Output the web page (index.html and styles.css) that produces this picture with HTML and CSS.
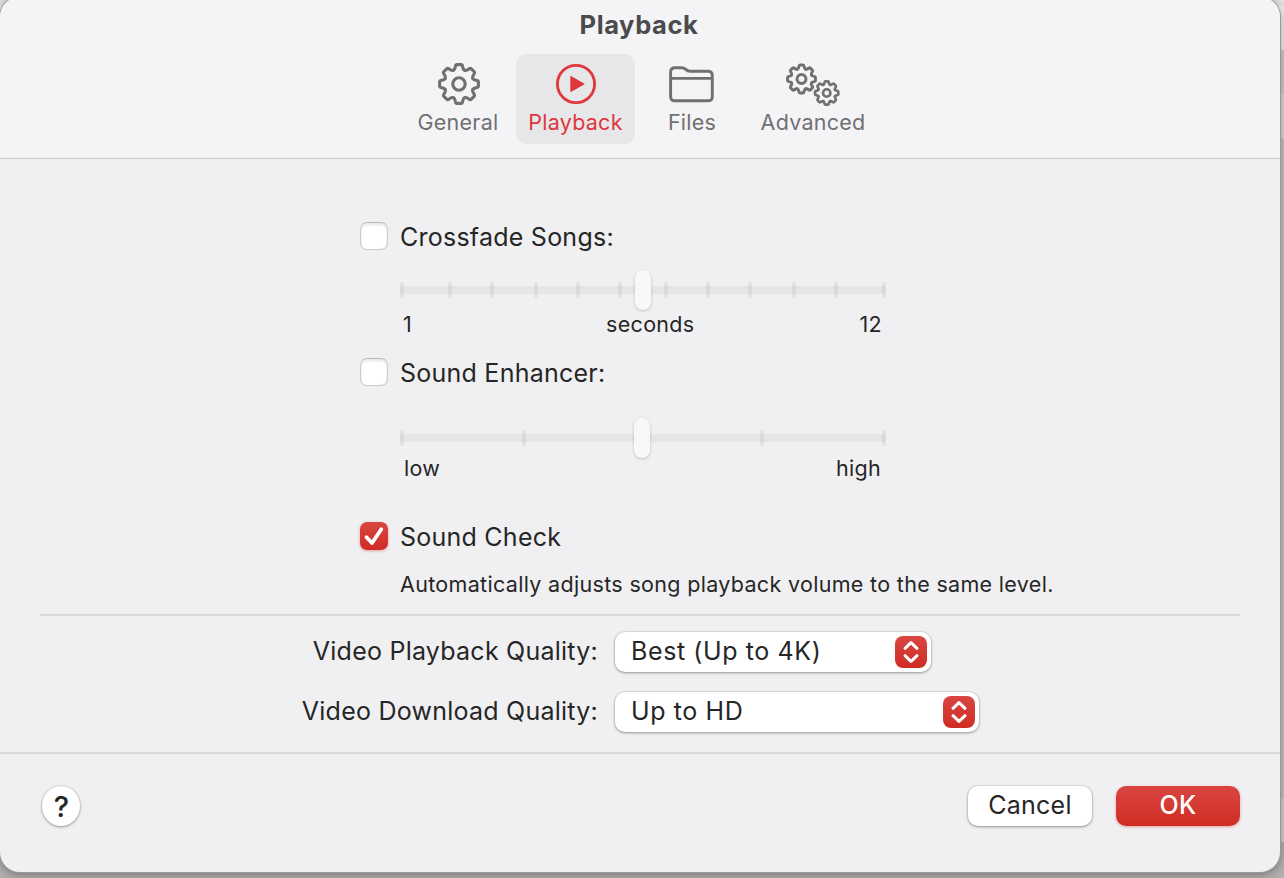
FILE: index.html
```html
<!DOCTYPE html>
<html lang="en">
  <head>
    <meta charset="UTF-8" />
    <meta name="viewport" content="width=device-width, initial-scale=1.0" />
    <title>Playback</title>
    <link rel="stylesheet" href="styles.css">
  </head>
  <body>
    <svg class="defs" width="0" height="0">
      <defs>
        <path id="tooth" d="M-5.7,-13.7 C-4.2,-14.4 -3.9,-15 -3.6,-17.5 Q-3.3,-19.4 -2,-19.4 H2 Q3.3,-19.4 3.6,-17.5 C3.9,-15 4.2,-14.4 5.7,-13.7" />
        <g id="gear">
          <use href="#tooth" />
          <use href="#tooth" transform="rotate(45)" />
          <use href="#tooth" transform="rotate(90)" />
          <use href="#tooth" transform="rotate(135)" />
          <use href="#tooth" transform="rotate(180)" />
          <use href="#tooth" transform="rotate(225)" />
          <use href="#tooth" transform="rotate(270)" />
          <use href="#tooth" transform="rotate(315)" />
          <circle r="6.2" />
        </g>
      </defs>
    </svg>
    <div class="window">
      <header>
        <h1>Playback</h1>
        <nav class="tabs">
          <div class="tab general">
            <svg width="60" height="48" viewBox="-31 -24 60 48"><use href="#gear" stroke-width="3.1" /></svg>
            <span>General</span>
          </div>
          <div class="tab playback active">
            <svg width="60" height="48" viewBox="-30 -24 60 48">
              <circle r="18.6" stroke-width="2.8" />
              <path class="solid" d="M-5,-7.2 L7.8,0 L-5,7.2 Z" stroke-width="1.4" />
            </svg>
            <span>Playback</span>
          </div>
          <div class="tab files">
            <svg width="60" height="48" viewBox="1 0 60 48">
              <path d="M9.6,36.5 V12.3 Q9.6,7.8 14,7.8 H20.5 Q23,7.8 24.7,9.4 Q26.6,11.3 29,11.3 H47 Q51.3,11.3 51.3,15.7 V36.5 Q51.3,40.8 47,40.8 H14 Q9.6,40.8 9.6,36.5 M9.6,18.4 H51.3" stroke-width="2.9" />
            </svg>
            <span>Files</span>
          </div>
          <div class="tab advanced">
            <svg width="60" height="48" viewBox="0 0 60 48">
              <use href="#gear" transform="translate(18.5 19) scale(.72)" stroke-width="4.1" />
              <use href="#gear" transform="translate(43.7 33) scale(.6)" stroke-width="4.4" />
            </svg>
            <span>Advanced</span>
          </div>
        </nav>
      </header>
      <main>
        <div class="row crossfade">
          <span class="checkbox"></span>
          <label>Crossfade Songs:</label>
        </div>
        <div class="slider">
          <svg width="486" height="44">
            <rect class="track" y="18" width="486" height="8" rx="3" />
            <path class="ticks" d="M2,16V28 M50,16V28 M92,16V28 M136,16V28 M178,16V28 M220,16V28 M266,16V28 M308,16V28 M350,16V28 M394,16V28 M436,16V28 M484,16V28" />
            <rect class="thumb" x="235" y="2" width="16" height="40" rx="8" />
          </svg>
          <div class="scale"><span>1</span><span class="unit">seconds</span><span>12</span></div>
        </div>
        <div class="row enhancer">
          <span class="checkbox"></span>
          <label>Sound Enhancer:</label>
        </div>
        <div class="slider low-high">
          <svg width="486" height="44">
            <rect class="track" y="18" width="486" height="8" rx="3" />
            <path class="ticks" d="M2,16V28 M124,16V28 M362,16V28 M484,16V28" />
            <rect class="thumb" x="234" y="2" width="16" height="40" rx="8" />
          </svg>
          <div class="scale"><span>low</span><span>high</span></div>
        </div>
        <div class="row check">
          <span class="checkbox checked">
            <svg width="28" height="28"><path d="M6.5,15.2 L12,21 L21.3,7.3" /></svg>
          </span>
          <label>Sound Check</label>
        </div>
        <p class="hint">Automatically adjusts song playback volume to the same level.</p>
        <hr>
        <div class="field">
          <label>Video Playback Quality:</label>
          <div class="select best">
            <span>Best (Up to 4K)</span>
            <svg class="arrows" width="32" height="32"><path d="M10,12.3 L16,6.6 L22,12.3 M10,19.7 L16,25.4 L22,19.7" /></svg>
          </div>
        </div>
        <div class="field">
          <label>Video Download Quality:</label>
          <div class="select hd">
            <span>Up to HD</span>
            <svg class="arrows" width="32" height="32"><path d="M10,12.3 L16,6.6 L22,12.3 M10,19.7 L16,25.4 L22,19.7" /></svg>
          </div>
        </div>
      </main>
      <footer>
        <button class="help">?</button>
        <button class="btn cancel">Cancel</button>
        <button class="btn ok">OK</button>
      </footer>
    </div>
  </body>
</html>
```
FILE: styles.css
```css
* {
  box-sizing: border-box;
}
body {
  margin: 0;
  height: 878px;
  overflow: hidden;
  background: linear-gradient(#e4e4e4 0 6px, #f0f0f0 6px 50px, #cfcfcf 50px 94px, #dcdcdc 94px 138px, #c6c6c6 138px 798px, #d2d2d2 798px 842px, #b2b2b2 842px);
  font-family: Inter, "Liberation Sans", sans-serif;
  font-size: 25px;
  letter-spacing: 0.24px;
  color: #262627;
}
.defs {
  position: absolute;
}
.window {
  width: 1280px;
  height: 875px;
  margin-top: -3px;
  display: flex;
  flex-direction: column;
  background: #f0f0f2;
  border-radius: 20px;
  box-shadow: 0 0 0 1px #999, 0 2px 12px rgba(0, 0, 0, 0.4);
  overflow: hidden;
}
header {
  height: 162px;
  flex: none;
  padding-top: 4px;
  background: #f4f4f6;
  border-bottom: 1px solid #c9c9cb;
}
h1 {
  margin: 0;
  height: 53px;
  line-height: 44px;
  padding-top: 2px;
  padding-right: 2px;
  font-size: 25.5px;
  font-weight: 700;
  letter-spacing: 0.6px;
  text-align: center;
  color: #4b4b4d;
}
.tabs {
  display: flex;
  padding-left: 400px;
}
.tab {
  height: 90px;
  padding-top: 6px;
  display: flex;
  flex-direction: column;
  align-items: center;
  border-radius: 11px;
  font-size: 21.5px;
  line-height: 28px;
  letter-spacing: 0.25px;
  color: #707072;
}
.tab svg {
  flex: none;
  fill: none;
  stroke: #707072;
  stroke-linecap: round;
  stroke-linejoin: round;
}
.general {
  width: 116px;
}
.playback {
  width: 119px;
}
.files {
  width: 112px;
  margin-left: 1px;
}
.advanced {
  width: 130px;
}
.active {
  background: #e7e7e9;
  color: #df373c;
}
.active svg {
  stroke: #df373c;
}
.solid {
  fill: #df373c;
}
main {
  height: 593px;
  flex: none;
}
.row {
  display: flex;
  align-items: center;
  gap: 12px;
  height: 28px;
  padding-left: 360px;
}
.row label {
  line-height: 30px;
  padding-top: 2px;
}
.checkbox {
  width: 28px;
  height: 28px;
  flex: none;
  border-radius: 7px;
  background: #fff;
  border: 1px solid #cacacc;
  border-top-color: #b8b8ba;
  box-shadow: inset 0 2px 3px rgba(0, 0, 0, 0.1);
}
.checked {
  border: none;
  background: linear-gradient(#d94541, #cf2d24);
  box-shadow: 0 1px 3px rgba(207, 45, 36, 0.4);
}
.checked svg {
  display: block;
  fill: none;
  stroke: #fff;
  stroke-width: 3.8;
  stroke-linecap: round;
  stroke-linejoin: round;
}
.crossfade {
  margin-top: 63px;
}
.slider {
  width: 486px;
  margin: 18px 0 0 400px;
  font-size: 21.5px;
}
.slider svg {
  display: block;
}
.track {
  fill: #e6e6e8;
}
.ticks {
  stroke: rgba(0, 0, 0, 0.055);
  stroke-width: 4;
  stroke-linecap: round;
}
.thumb {
  fill: #f8f8f8;
  filter: drop-shadow(0 1px 1.5px rgba(0, 0, 0, 0.2));
}
.scale {
  display: flex;
  justify-content: space-between;
  padding: 0 4px 0 3px;
  line-height: 24px;
  letter-spacing: 0.3px;
}
.unit {
  margin-left: 29px;
}
.enhancer {
  margin-top: 22px;
}
.low-high {
  margin-top: 30px;
}
.low-high .scale {
  padding: 0 5px 0 4px;
  line-height: 16px;
}
.check {
  margin-top: 46px;
}
.hint {
  margin: 20px 0 0 400px;
  font-size: 21.5px;
  line-height: 28px;
  letter-spacing: 0.32px;
}
hr {
  height: 2px;
  margin: 16px 40px 15px;
  border: none;
  background: #d9d9db;
}
.field {
  display: flex;
  align-items: center;
  height: 42px;
  margin-bottom: 18px;
}
.field label {
  width: 598px;
  padding-bottom: 2px;
  text-align: right;
}
.select {
  height: 40px;
  margin-left: 17px;
  padding: 0 4px 0 16px;
  display: flex;
  align-items: center;
  justify-content: space-between;
  background: #fff;
  border-radius: 10px;
  box-shadow: 0 0 0 1px rgba(0, 0, 0, 0.06), 0 1px 3px rgba(0, 0, 0, 0.35);
}
.select span {
  padding-bottom: 2px;
  letter-spacing: 0.6px;
}
.best {
  width: 316px;
}
.hd {
  width: 364px;
}
.arrows {
  border-radius: 8px;
  background: linear-gradient(#d94541, #cf2d24);
  fill: none;
  stroke: #fff;
  stroke-width: 3;
  stroke-linecap: round;
  stroke-linejoin: round;
}
footer {
  flex: 1;
  display: flex;
  padding: 32px 40px 0 42px;
  border-top: 2px solid #d9d9db;
}
button {
  height: 40px;
  padding: 0 0 2px;
  border: none;
  font-family: inherit;
  font-size: 25px;
  letter-spacing: 0.24px;
  color: #262627;
  background: #fff;
  box-shadow: 0 0 0 1px rgba(0, 0, 0, 0.06), 0 1px 3px rgba(0, 0, 0, 0.35);
}
.help {
  width: 38px;
  height: 40px;
  padding: 0 0 0 1px;
  border-radius: 50%;
  font-size: 29px;
  font-weight: 500;
  margin-right: auto;
}
.btn {
  width: 124px;
  border-radius: 10px;
}
.ok {
  margin-left: 24px;
  color: #fff;
  font-weight: 500;
  background: linear-gradient(#d94541, #cf2d24);
  box-shadow: 0 1px 3px rgba(207, 45, 36, 0.4);
}
```
